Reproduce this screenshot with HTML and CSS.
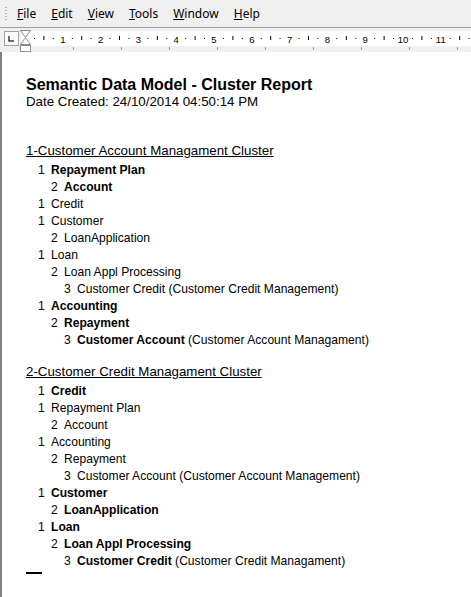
FILE: index.html
```html
<!DOCTYPE html>
<html lang="en">
<head>
    <meta charset="UTF-8">
    <title>Cluster Report</title>
    <link rel="stylesheet" href="styles.css">
</head>
<body>
    <div class="menubar">
        <span class="grip"></span>
        <span class="menu-item"><u>F</u>ile</span>
        <span class="menu-item"><u>E</u>dit</span>
        <span class="menu-item"><u>V</u>iew</span>
        <span class="menu-item"><u>T</u>ools</span>
        <span class="menu-item"><u>W</u>indow</span>
        <span class="menu-item"><u>H</u>elp</span>
    </div>

    <div class="ruler">
        <svg width="471" height="24" viewBox="0 0 471 24">
            <!-- tab selector -->
            <rect x="4.5" y="3.5" width="14" height="14" fill="#fafafa" stroke="#a0a0a0"/>
            <path d="M9 8 V13 H14" fill="none" stroke="#404040" stroke-width="1.5"/>
            <!-- white band -->
            <rect x="21" y="3" width="450" height="15" fill="#ffffff"/>
            <g id="marks"></g>
            <!-- indent markers -->
            <path d="M20.5 2.5 H30.5 L25.5 9.5 L30.5 16.5 H20.5 L25.5 9.5 Z" fill="#ffffff" stroke="#8c8c8c"/>
            <rect x="20.5" y="17.5" width="10" height="6" fill="#ffffff" stroke="#8c8c8c"/>
        </svg>
    </div>

    <div class="page">
        <h1 class="title">Semantic Data Model - Cluster Report</h1>
        <div class="created">Date Created: 24/10/2014 04:50:14 PM</div>

        <div class="cluster">
            <div class="cluster-name">1-Customer Account Managament Cluster</div>
            <div class="row l1 bold"><span class="num">1</span>Repayment Plan</div>
            <div class="row l2 bold"><span class="num">2</span>Account</div>
            <div class="row l1"><span class="num">1</span>Credit</div>
            <div class="row l1"><span class="num">1</span>Customer</div>
            <div class="row l2"><span class="num">2</span>LoanApplication</div>
            <div class="row l1"><span class="num">1</span>Loan</div>
            <div class="row l2"><span class="num">2</span>Loan Appl Processing</div>
            <div class="row l3"><span class="num">3</span>Customer Credit (Customer Credit Management)</div>
            <div class="row l1 bold"><span class="num">1</span>Accounting</div>
            <div class="row l2 bold"><span class="num">2</span>Repayment</div>
            <div class="row l3"><span class="num">3</span><b>Customer Account</b> (Customer Account Managament)</div>
        </div>

        <div class="cluster">
            <div class="cluster-name">2-Customer Credit Managament Cluster</div>
            <div class="row l1 bold"><span class="num">1</span>Credit</div>
            <div class="row l1"><span class="num">1</span>Repayment Plan</div>
            <div class="row l2"><span class="num">2</span>Account</div>
            <div class="row l1"><span class="num">1</span>Accounting</div>
            <div class="row l2"><span class="num">2</span>Repayment</div>
            <div class="row l3"><span class="num">3</span>Customer Account (Customer Account Management)</div>
            <div class="row l1 bold"><span class="num">1</span>Customer</div>
            <div class="row l2 bold"><span class="num">2</span>LoanApplication</div>
            <div class="row l1 bold"><span class="num">1</span>Loan</div>
            <div class="row l2 bold"><span class="num">2</span>Loan Appl Processing</div>
            <div class="row l3"><span class="num">3</span><b>Customer Credit</b> (Customer Credit Managament)</div>
        </div>

        <div class="end-mark"></div>
    </div>

    <script>
        // draw the ruler ticks and numbers
        var marks = document.getElementById('marks');
        var cm = 37.8;
        var out = '';
        for (var i = 0; i < 12; i++) {
            var x = 25 + i * cm;
            if (i > 0) {
                out += '<text x="' + x.toFixed(1) + '" y="14.5" font-size="9.5" text-anchor="middle" fill="#000">' + i + '</text>';
            }
            out += '<rect x="' + (x + cm / 4 - 0.5).toFixed(1) + '" y="10" width="1" height="1" fill="#000"/>';
            out += '<rect x="' + (x + cm / 2 - 0.5).toFixed(1) + '" y="8" width="1" height="4" fill="#000"/>';
            out += '<rect x="' + (x + cm * 3 / 4 - 0.5).toFixed(1) + '" y="10" width="1" height="1" fill="#000"/>';
        }
        // default tab stops
        for (var t = 73; t < 471; t += 48) {
            out += '<rect x="' + t + '" y="19" width="1" height="3" fill="#a0a0a0"/>';
        }
        marks.innerHTML = out;
    </script>
</body>
</html>
```

FILE: styles.css
```css
body {
    margin: 0;
    background-color: #ffffff;
    font-family: "Liberation Sans", Arial, sans-serif;
    color: #000;
    width: 471px;
    height: 597px;
    overflow: hidden;
}
.menubar {
    height: 28px;
    background-color: #f0f0f0;
    border-bottom: 1px solid #a0a0a0;
    display: flex;
    align-items: center;
    font-family: "Noto Sans", "Open Sans", sans-serif;
    font-size: 12px;
    box-sizing: border-box;
}
.grip {
    width: 2px;
    height: 13px;
    margin-left: 5px;
    margin-right: 10px;
    background-image: linear-gradient(#b4b4b4 50%, transparent 50%);
    background-size: 2px 3px;
}
.menu-item {
    margin-right: 15px;
}
.ruler {
    height: 24px;
    background-color: #f0f0f0;
}
.ruler svg {
    display: block;
    font-family: "Liberation Sans", Arial, sans-serif;
}
.page {
    border-left: 2px solid #808080;
    height: 545px;
    padding: 24px 0 0 24px;
    box-sizing: border-box;
}
.title {
    margin: 0;
    font-size: 16px;
    font-weight: bold;
    line-height: 18px;
}
.created {
    font-size: 13.3px;
    line-height: 16px;
}
.cluster {
    margin-top: 32px;
}
.cluster + .cluster {
    margin-top: 14px;
}
.cluster-name {
    font-size: 13.3px;
    line-height: 18px;
    text-decoration: underline;
    margin-bottom: 2px;
}
.row {
    font-size: 12.1px;
    line-height: 17px;
    white-space: nowrap;
}
.bold {
    font-weight: bold;
}
.num {
    display: inline-block;
    width: 13px;
    font-weight: normal;
}
.l1 {
    padding-left: 12px;
}
.l2 {
    padding-left: 25px;
}
.l3 {
    padding-left: 38px;
}
.end-mark {
    width: 16px;
    height: 2px;
    background-color: #000;
    margin-top: 2px;
}
```
